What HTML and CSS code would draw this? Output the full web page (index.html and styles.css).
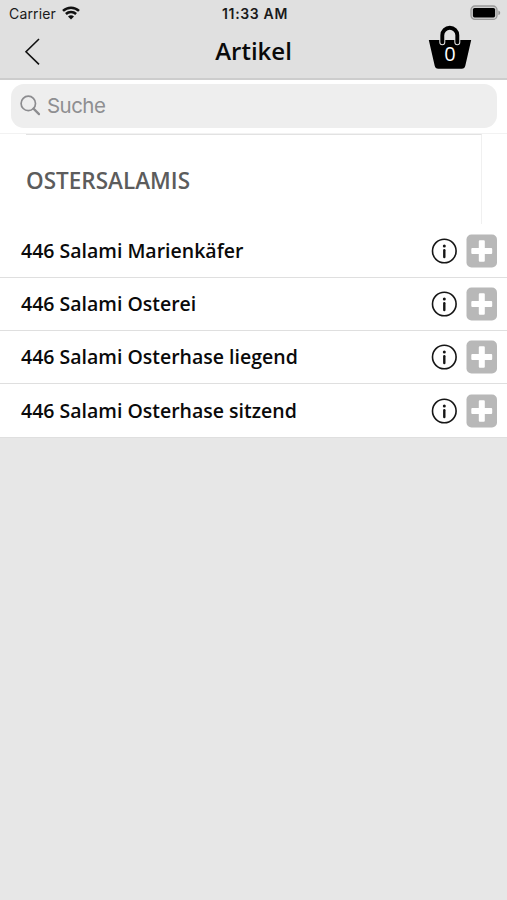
FILE: index.html
```html
<!DOCTYPE html>
<html lang="de">
<head>
    <meta charset="utf-8">
    <title>Artikel</title>
    <link rel="stylesheet" href="styles.css">
</head>
<body>

<!-- icons used more than once -->
<svg class="sprite">
    <symbol id="info" viewBox="0 0 26 26">
        <circle cx="13.3" cy="13" r="11.8" fill="none" stroke="#161616" stroke-width="1.6"/>
        <circle cx="13.3" cy="7.9" r="1.5" fill="#161616"/>
        <path d="M13.3 12.2v6.8" fill="none" stroke="#161616" stroke-width="2.4" stroke-linecap="round"/>
    </symbol>
    <symbol id="plus" viewBox="0 0 31 34">
        <rect x="0.5" y="0.5" width="30.5" height="33" rx="5" fill="#b8b8b8"/>
        <path d="M13.8 6.3h4q1 0 1 1V14h6.4q1 0 1 1v4q0 1-1 1h-6.4v6.7q0 1-1 1h-4q-1 0-1-1V20H6.3q-1 0-1-1v-4q0-1 1-1h6.5V7.3q0-1 1-1z" fill="#fff"/>
    </symbol>
</svg>

<header class="header">
    <div class="status-bar">
        <div class="carrier">
            <span>Carrier</span>
            <svg class="wifi" width="18" height="14" viewBox="0 0 18 14">
                <path d="M1 4.9a11.6 11.6 0 0 1 16 0M3.9 8a7.3 7.3 0 0 1 10.2 0" fill="none" stroke="#111" stroke-width="2.5"/>
                <path d="M9 13.6L6 10.6a4.3 4.3 0 0 1 6 0z" fill="#111"/>
            </svg>
        </div>
        <span class="time">11:33 AM</span>
        <svg class="battery" width="31" height="16" viewBox="0 0 31 16">
            <rect x="1" y="1" width="26" height="13.4" rx="4" fill="#d0d0d0" stroke="#999" stroke-width="1.3"/>
            <rect x="2.9" y="3" width="22.2" height="9.4" rx="1.6" fill="#000"/>
            <path d="M28.4 5.4c2.4.8 2.4 3.8 0 4.6z" fill="#929292"/>
        </svg>
    </div>
    <div class="nav-bar">
        <button type="button" class="back-button">
            <svg width="16" height="28" viewBox="0 0 16 28">
                <path d="M15 2L2 14.7l13 12.7" fill="none" stroke="#111" stroke-width="1.6"/>
            </svg>
        </button>
        <h1>Artikel</h1>
        <button type="button" class="basket">
            <svg width="44" height="46" viewBox="0 0 44 46">
                <path d="M.8 15h42.4l-5.9 25.8q-.6 3-3.6 3H10.3q-3 0-3.6-3z" fill="#000"/>
                <path d="M14.3 17.3V10.3a7.5 7.5 0 0 1 15 0v7" fill="none" stroke="#e0e0e0" stroke-width="6" stroke-linecap="round"/>
                <path d="M14.3 17.3V10.3a7.5 7.5 0 0 1 15 0v7" fill="none" stroke="#000" stroke-width="3.9" stroke-linecap="round"/>
            </svg>
            <span class="basket-count">0</span>
        </button>
    </div>
</header>

<div class="search">
    <label class="search-field">
        <svg width="21" height="21" viewBox="0 0 21 21">
            <circle cx="8.3" cy="8.4" r="7.2" fill="none" stroke="#8c8c8f" stroke-width="1.7"/>
            <path d="M13.5 13.6l5.5 5.5" fill="none" stroke="#8c8c8f" stroke-width="2.2" stroke-linecap="round"/>
        </svg>
        <input type="text" placeholder="Suche">
    </label>
</div>

<div class="category">
    <h2>OSTERSALAMIS</h2>
</div>

<ul class="articles">
    <li>
        <span class="name">446 Salami Marienkäfer</span>
        <svg class="info"><use href="#info"/></svg>
        <svg class="plus"><use href="#plus"/></svg>
    </li>
    <li>
        <span class="name">446 Salami Osterei</span>
        <svg class="info"><use href="#info"/></svg>
        <svg class="plus"><use href="#plus"/></svg>
    </li>
    <li>
        <span class="name">446 Salami Osterhase liegend</span>
        <svg class="info"><use href="#info"/></svg>
        <svg class="plus"><use href="#plus"/></svg>
    </li>
    <li>
        <span class="name">446 Salami Osterhase sitzend</span>
        <svg class="info"><use href="#info"/></svg>
        <svg class="plus"><use href="#plus"/></svg>
    </li>
</ul>

</body>
</html>
```
FILE: styles.css
```css
* {
    box-sizing: border-box;
}
body {
    margin: 0;
    min-height: 900px;
    background-color: #e7e7e7;
    font-family: "Open Sans", sans-serif;
    color: #0a0a0a;
}
h1, h2, ul {
    margin: 0;
    padding: 0;
}
button {
    padding: 0;
    border: none;
    background: none;
    cursor: pointer;
}
svg {
    display: block;
    flex-shrink: 0;
}
.sprite {
    display: none;
}

.header {
    height: 80px;
    background-color: #e0e0e0;
    border-bottom: 2px solid #cdcdcd;
}
.status-bar {
    display: grid;
    grid-template-columns: 1fr auto 1fr;
    align-items: center;
    height: 26px;
    padding: 0 6px 0 9px;
    font-family: Inter, sans-serif;
    font-size: 14px;
    color: #1a1a1a;
}
.carrier {
    display: flex;
    align-items: center;
    gap: 6px;
    letter-spacing: 0.15px;
}
.time {
    font-weight: 600;
    letter-spacing: 0.65px;
}
.battery {
    justify-self: end;
}
.nav-bar {
    display: grid;
    grid-template-columns: 60px 1fr 60px;
    align-items: center;
    height: 50px;
    padding: 0 24px 0 24px;
}
.nav-bar h1 {
    margin-top: -1px;
    font-size: 24px;
    font-weight: 600;
    line-height: 48px;
    text-align: center;
}
.basket {
    position: relative;
    width: 44px;
    height: 46px;
    justify-self: end;
    margin: -6px 11px 0 0;
}
.basket-count {
    position: absolute;
    top: 17px;
    left: 0;
    width: 44px;
    font-family: "Open Sans", sans-serif;
    font-size: 20px;
    line-height: 24px;
    color: #fff;
}

.search {
    height: 54px;
    padding: 4px 10px 0 11px;
    background-color: #fff;
    border-bottom: 1px solid #f2f2f2;
}
.search-field {
    display: flex;
    align-items: center;
    gap: 6px;
    height: 44px;
    padding-left: 9px;
    border-radius: 13px;
    background-color: #eee;
}
.search-field svg {
    margin-top: -1px;
}
.search-field input {
    width: 400px;
    margin-top: -2px;
    padding: 0;
    border: none;
    outline: none;
    background: none;
    font-family: Inter, sans-serif;
    font-size: 20.5px;
    letter-spacing: -0.55px;
}
.search-field input::placeholder {
    color: #8e8e91;
}

.category {
    height: 90.6px;
    padding: 0 25px 0 26px;
    background-color: #fff;
}
.category h2 {
    height: 90px;
    border-top: 1px solid #e2e2e2;
    border-right: 1px solid #f0f0f0;
    font-size: 22.5px;
    font-weight: 600;
    line-height: 91px;
    color: #5c5c5c;
}

.articles {
    list-style: none;
    background-color: #fff;
}
.articles li {
    display: flex;
    align-items: center;
    height: 53.3px;
    padding: 0 10px 0 21px;
    border-bottom: 1px solid #dfdfdf;
}
.name {
    flex: 1;
    margin-top: -1px;
    font-size: 19.5px;
    font-weight: 600;
    white-space: nowrap;
}
.info {
    width: 26px;
    height: 26px;
    margin-right: 9px;
}
.plus {
    width: 31px;
    height: 34px;
}
```
